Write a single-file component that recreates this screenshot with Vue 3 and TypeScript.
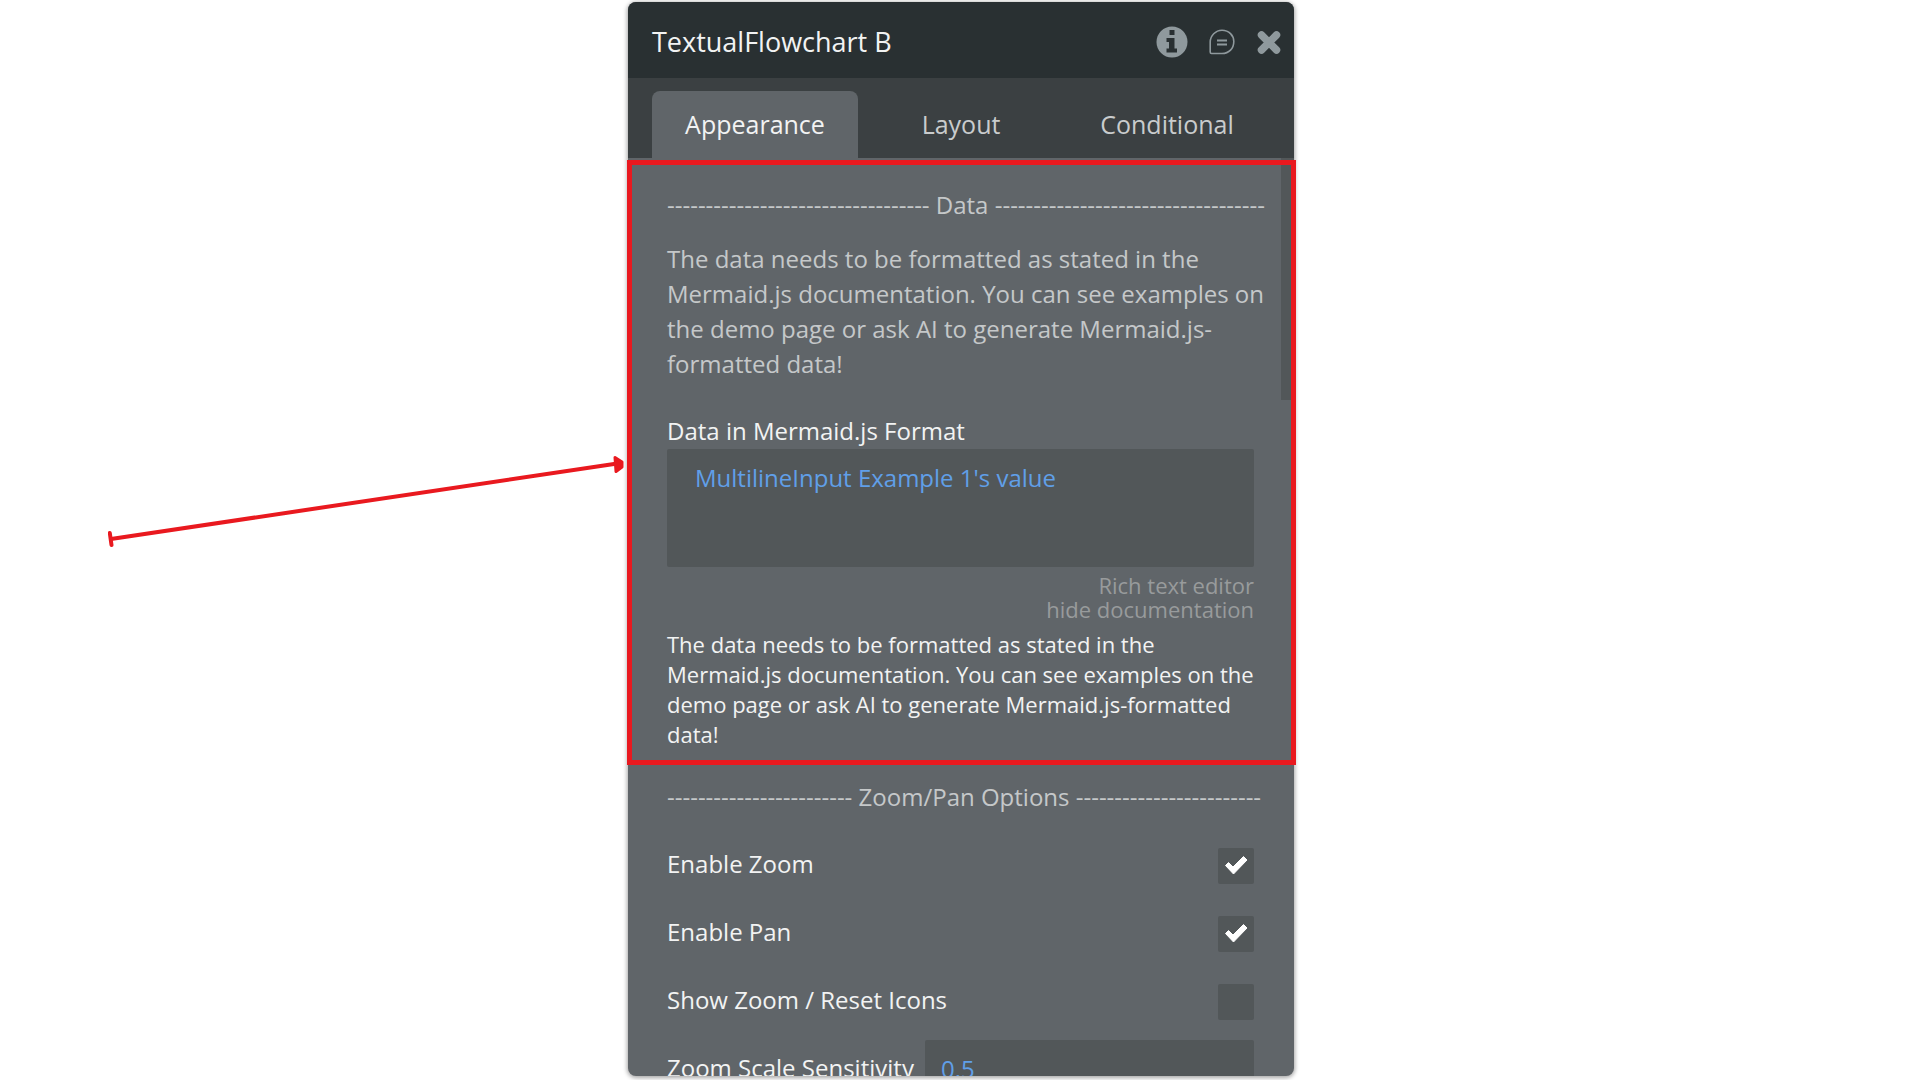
<script setup lang="ts">
import { ref } from 'vue'

const tabs = ['Appearance', 'Layout', 'Conditional']
const activeTab = ref('Appearance')

const hint =
  'The data needs to be formatted as stated in the Mermaid.js documentation. You can see examples on the demo page or ask AI to generate Mermaid.js-formatted data!'

const dashes = (count: number): string => '-'.repeat(count)

const source = ref("MultilineInput Example 1's value")
const sensitivity = ref('0.5')
const options = ref([
  { id: 'enable-zoom', label: 'Enable Zoom', checked: true },
  { id: 'enable-pan', label: 'Enable Pan', checked: true },
  { id: 'show-icons', label: 'Show Zoom / Reset Icons', checked: false },
])
</script>

<template>
  <main class="stage">
    <div class="holder">
      <section class="panel">
        <header class="titlebar">
          <h1>TextualFlowchart B</h1>
          <div class="actions">
            <button type="button" aria-label="Info">
              <svg width="32" height="32" viewBox="0 0 32 32">
                <circle cx="16" cy="16" r="15.5" fill="#8f999d" />
                <path
                  d="M13.5 4h5v5h-5zM10.5 12h8v10.500h2.500v4H10.500v-4H13V16h-2.500z"
                  fill="#293032"
                />
              </svg>
            </button>
            <button type="button" aria-label="Comments">
              <svg width="26" height="26" viewBox="0 0 26 26" fill="none" stroke="#8f999d">
                <path
                  d="M2.500 24.500C1.500 24.500 1.200 24 1.200 23V13A12 12 0 0 1 13 1.200C20 1.200 24.800 6.500 24.800 12.500C24.800 19.500 20 24.500 13 24.500Z"
                  stroke-width="1.600"
                />
                <path d="M8 11.500h10M8 15.500h10" stroke-width="1.800" />
              </svg>
            </button>
            <button type="button" aria-label="Close">
              <svg width="26" height="26" viewBox="0 0 26 26">
                <path
                  d="M5.500 6L20.500 21M20.500 6L5.500 21"
                  stroke="#8f999d"
                  stroke-width="7.500"
                  stroke-linecap="round"
                />
              </svg>
            </button>
          </div>
        </header>

        <nav class="tabs" role="tablist">
          <button
            v-for="tab in tabs"
            :key="tab"
            type="button"
            role="tab"
            :aria-selected="tab === activeTab"
            :class="['tab', { active: tab === activeTab }]"
            @click="activeTab = tab"
          >
            {{ tab }}
          </button>
        </nav>

        <div class="body">
          <div class="scrollbar"></div>

          <h2 class="divider">{{ dashes(34) }} Data {{ dashes(35) }}</h2>
          <p class="description">{{ hint }}</p>

          <label class="field-label" for="mermaid-source">Data in Mermaid.js Format</label>
          <textarea id="mermaid-source" v-model="source" class="source"></textarea>
          <div class="links">
            <a href="#">Rich text editor</a>
            <a href="#">hide documentation</a>
          </div>
          <p class="documentation">{{ hint }}</p>

          <h2 class="divider second">{{ dashes(24) }} Zoom/Pan Options {{ dashes(24) }}</h2>

          <div v-for="option in options" :key="option.id" class="row">
            <label :for="option.id">{{ option.label }}</label>
            <span class="check">
              <input :id="option.id" v-model="option.checked" type="checkbox" />
              <svg v-if="option.checked" width="36" height="36" viewBox="0 0 36 36">
                <path
                  d="M7.500 17.500l3-3 4.500 4.500 10.500-10.500 3.500 3.500L15.500 26z"
                  fill="#fff"
                  stroke="#fff"
                  stroke-linejoin="round"
                />
              </svg>
            </span>
          </div>
          <div class="row">
            <label for="sensitivity">Zoom Scale Sensitivity</label>
            <input id="sensitivity" v-model="sensitivity" class="number" type="text" />
          </div>
        </div>
      </section>

      <div class="highlight"></div>
      <svg class="arrow" width="520" height="100" viewBox="0 0 520 100">
        <g fill="none" stroke="#e9191f" stroke-width="4" stroke-linecap="round">
          <path d="M3 89L506 14" />
          <path d="M1.800 83L3.500 95" />
        </g>
        <path
          d="M507 7.500L514 12V17L508 21.500Z"
          fill="#e9191f"
          stroke="#e9191f"
          stroke-width="3"
          stroke-linejoin="round"
        />
      </svg>
    </div>
  </main>
</template>

<style>
body {
  margin: 0;
  background: #fff;
}
</style>

<style scoped>
* {
  box-sizing: border-box;
}

.stage {
  display: flex;
  justify-content: center;
  height: 100vh;
  padding: 2px 0 4px 2px;
  overflow: hidden;
  font-family: 'Open Sans', sans-serif;
  font-size: 24px;
  color: #f2f3f3;
}

.holder {
  position: relative;
  width: 666px;
  max-width: 100%;
}

.panel {
  display: flex;
  flex-direction: column;
  height: 100%;
  overflow: hidden;
  border-radius: 8px;
  background: #606569;
  box-shadow: 0 1px 4px 1px rgba(0, 0, 0, 0.35);
}

button {
  padding: 0;
  border: 0;
  background: none;
  font: inherit;
  cursor: pointer;
}

h1,
h2,
p {
  margin: 0;
  font-weight: 400;
}

.titlebar {
  flex: none;
  display: flex;
  align-items: center;
  justify-content: space-between;
  height: 76px;
  padding: 4px 12px 0 24px;
  background: #293032;
}

h1 {
  font-size: 27px;
  line-height: 36px;
}

.actions {
  display: flex;
  align-items: center;
  gap: 21px;
}

.actions svg {
  display: block;
}

.tabs {
  flex: none;
  display: flex;
  height: 80px;
  padding: 13px 24px 0;
  background: #3b4042;
}

.tab {
  flex: 1;
  padding-bottom: 2px;
  border-radius: 8px 8px 0 0;
  font-size: 25px;
  color: #c9cccd;
}

.tab.active {
  background: #606569;
  color: #f2f3f3;
}

.body {
  position: relative;
  flex: 1;
  min-height: 0;
  overflow: hidden;
  padding: 29px 40px 0 39px;
}

.scrollbar {
  position: absolute;
  top: 0;
  right: 0;
  width: 13px;
  height: 242px;
  background: #525759;
}

.divider {
  font-size: 24px;
  line-height: 36px;
  white-space: nowrap;
  color: #c5c8c9;
}

.description {
  margin: 18px -16px 0 0;
  line-height: 35px;
  color: #c5c8c9;
}

.field-label {
  display: block;
  margin-top: 32px;
  line-height: 36px;
}

.source {
  display: block;
  width: 100%;
  height: 118px;
  padding: 11px 28px;
  border: 0;
  border-radius: 2px;
  outline: 0;
  resize: none;
  background: #525759;
  font: inherit;
  line-height: 36px;
  color: #609fe8;
}

.links {
  display: flex;
  flex-direction: column;
  align-items: flex-end;
  margin-top: 6px;
  font-size: 22px;
  line-height: 24px;
}

.links a {
  color: #989b9c;
  text-decoration: none;
}

.documentation {
  margin-top: 8px;
  font-size: 22px;
  line-height: 30px;
}

.second {
  margin: 30px 0 17px;
}

.row {
  display: flex;
  align-items: center;
  justify-content: space-between;
  height: 68px;
}

.row label {
  padding-bottom: 6px;
}

.check {
  position: relative;
  display: flex;
}

.check input {
  appearance: none;
  width: 36px;
  height: 36px;
  margin: 0;
  border-radius: 2px;
  background: #525759;
}

.check svg {
  position: absolute;
  inset: 0;
  pointer-events: none;
}

.number {
  width: 329px;
  height: 60px;
  padding: 0 16px 4px;
  border: 0;
  border-radius: 2px;
  outline: 0;
  background: #525759;
  font: inherit;
  color: #609fe8;
}

.highlight {
  position: absolute;
  top: 158px;
  left: -1px;
  right: -2px;
  height: 605px;
  border: 5px solid #e9191f;
  pointer-events: none;
}

.arrow {
  position: absolute;
  top: 448px;
  right: 100%;
  pointer-events: none;
}
</style>
